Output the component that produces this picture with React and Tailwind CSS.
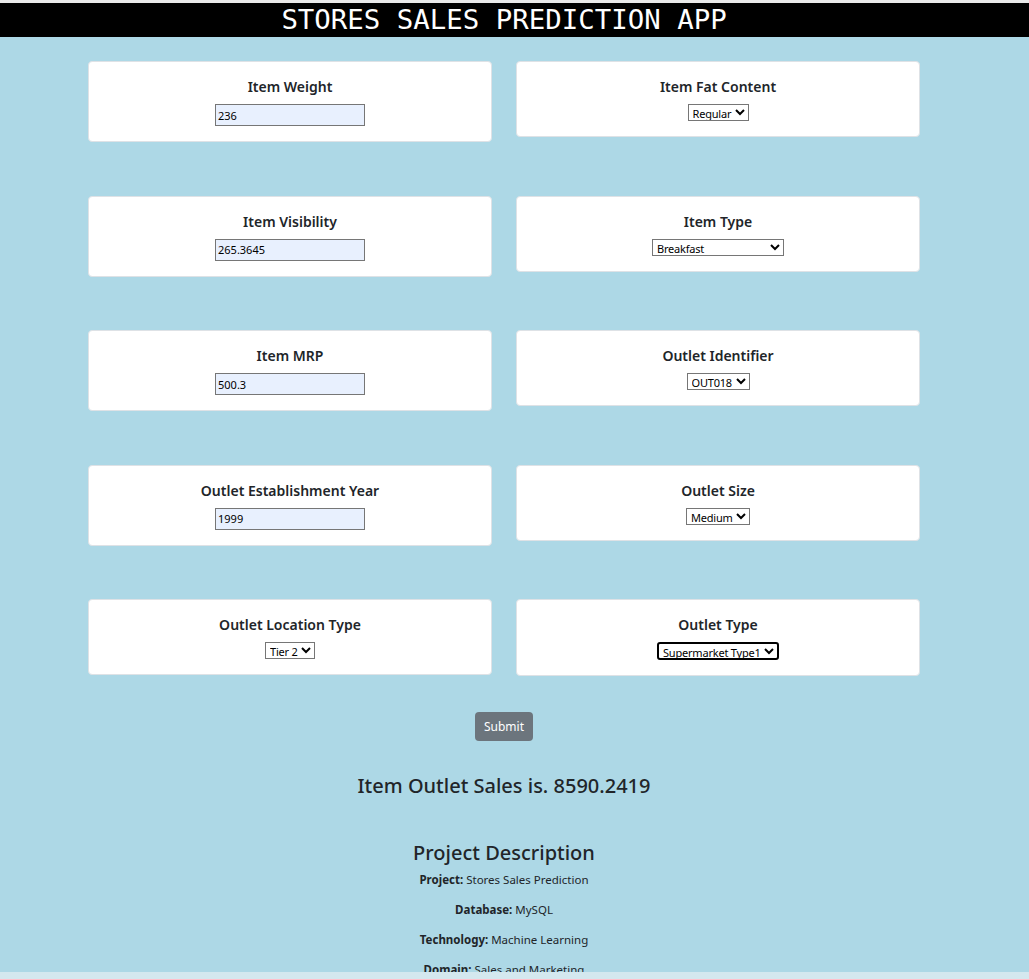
import React, { useState } from "react";

const fields = [
  { left: { label: "Item Weight", value: "236" }, right: { label: "Item Fat Content", options: ["Regular", "Low Fat"] } },
  { left: { label: "Item Visibility", value: "265.3645" }, right: { label: "Item Type", options: ["Breakfast", "Baking Goods", "Breads", "Canned", "Dairy"], width: "w-[132px]" } },
  { left: { label: "Item MRP", value: "500.3" }, right: { label: "Outlet Identifier", options: ["OUT018", "OUT010", "OUT013"] } },
  { left: { label: "Outlet Establishment Year", value: "1999" }, right: { label: "Outlet Size", options: ["Medium", "Small", "High"] } },
  { left: { label: "Outlet Location Type", options: ["Tier 2", "Tier 1", "Tier 3"] }, right: { label: "Outlet Type", options: ["Supermarket Type1", "Grocery Store"], focused: true } },
];

const Card = ({ item }) => {
  const [value, setValue] = useState(item.value ?? item.options[0]);
  return (
    <div className="bg-white border border-[#dee2e6] rounded-[4px] pt-[13px] pb-[15px] flex flex-col items-center">
      <label className="text-[14px] font-semibold leading-[24px] mb-[5px] text-[#212529]">{item.label}</label>
      {item.options ? (
        <select
          value={value}
          onChange={(e) => setValue(e.target.value)}
          className={`${item.width ?? ""} ${item.focused ? "h-[18px] border-2 border-black rounded-[3px]" : "h-[17px] border border-[#767676]"} bg-white text-[11px] tracking-[-0.2px] leading-none text-black p-0`}
        >
          {item.options.map((o) => (
            <option key={o}>{o}</option>
          ))}
        </select>
      ) : (
        <input
          type="text"
          value={value}
          onChange={(e) => setValue(e.target.value)}
          className="w-[150px] h-[22px] bg-[#e8f0fe] border border-[#767676] text-[11px] text-black px-[2px] outline-none"
        />
      )}
    </div>
  );
};

const App = () => {
  return (
    <div className="min-h-screen bg-[#add8e6] font-['Noto_Sans','Open_Sans',sans-serif] text-[#212529] border-t-[3px] border-[#e9e9e9]">
      <div className="bg-black h-[34px] flex items-center justify-center pr-[21px]">
        <h1 className="font-['DejaVu_Sans_Mono','Liberation_Mono',monospace] text-[27.4px] text-white leading-none">
          STORES SALES PREDICTION APP
        </h1>
      </div>

      <div className="w-[832px] ml-[88px] mt-[24px] flex flex-col gap-y-[53.5px]">
        {fields.map((row, i) => (
          <div key={i} className="grid grid-cols-2 gap-x-[24px] items-start">
            <Card item={row.left} />
            <Card item={row.right} />
          </div>
        ))}
      </div>

      <div className="w-[1008px] flex flex-col items-center">
        <button className="mt-[36px] h-[29px] px-[9px] bg-[#6c757d] text-white text-[12px] rounded-[4px]">Submit</button>
        <h2 className="mt-[31px] text-[20px] font-medium leading-[28px]">Item Outlet Sales is. 8590.2419</h2>
        <h3 className="mt-[39px] text-[20px] font-medium leading-[28px]">Project Description</h3>
        <div className="text-[11.5px] text-center mt-[4px] flex flex-col gap-y-[12px] leading-[18px]">
          <p><b>Project:</b> Stores Sales Prediction</p>
          <p><b>Database:</b> MySQL</p>
          <p><b>Technology:</b> Machine Learning</p>
          <p><b>Domain:</b> Sales and Marketing</p>
        </div>
      </div>

      <div className="fixed bottom-0 left-0 right-0 h-[7px] bg-[#d4e8ef]" />
    </div>
  );
};

export default App;
